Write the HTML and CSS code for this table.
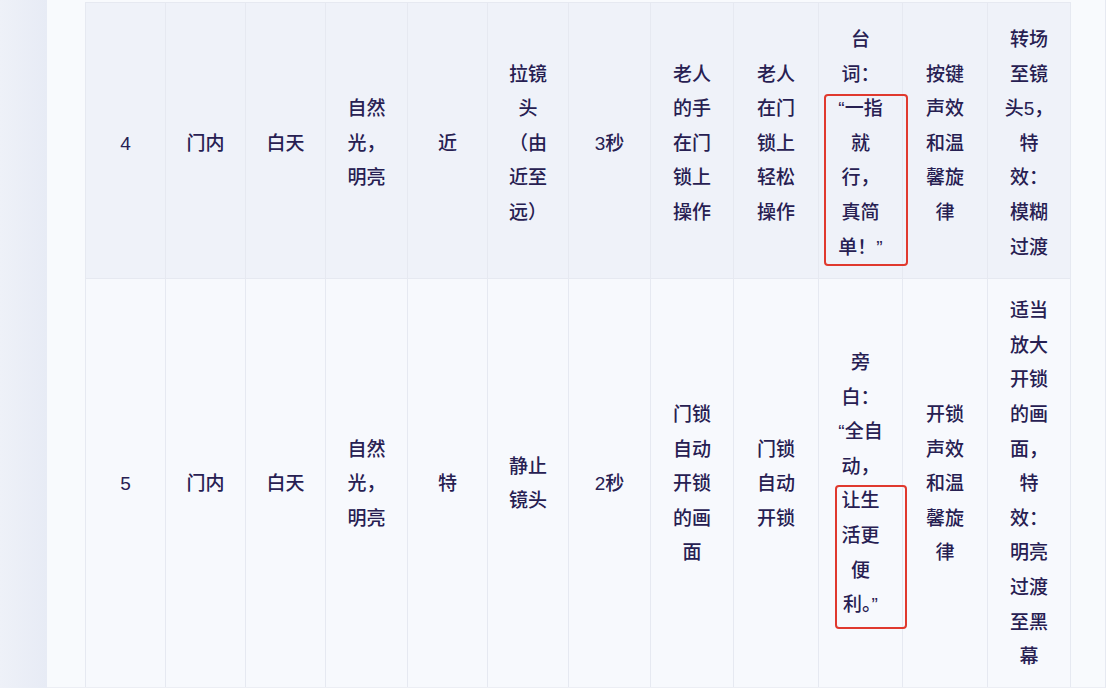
FILE: index.html
```html
<!DOCTYPE html>
<html lang="zh">
<head>
<meta charset="utf-8">
<link rel="stylesheet" href="styles.css">
</head>
<body>
<div class="page">
  <div class="side"></div>
  <div class="sheet">
    <table class="shots">
      <colgroup>
        <col class="w80"><col class="w80"><col class="w80"><col class="w82"><col class="w80"><col class="w81">
        <col class="w82"><col class="w83"><col class="w85"><col class="w84"><col class="w85"><col class="w83">
      </colgroup>
      <tbody>
        <tr class="r1">
          <td>4</td>
          <td>门内</td>
          <td>白天</td>
          <td>自然<br>光，<br>明亮</td>
          <td>近</td>
          <td>拉镜<br>头<br>（由<br>近至<br>远）</td>
          <td>3秒</td>
          <td>老人<br>的手<br>在门<br>锁上<br>操作</td>
          <td>老人<br>在门<br>锁上<br>轻松<br>操作</td>
          <td class="mark-cell">台<br>词：<br>“一指<br>就<br>行，<br>真简<br>单！”<div class="mark mark1"></div></td>
          <td>按键<br>声效<br>和温<br>馨旋<br>律</td>
          <td>转场<br>至镜<br>头5，<br>特<br>效：<br>模糊<br>过渡</td>
        </tr>
        <tr class="r2">
          <td>5</td>
          <td>门内</td>
          <td>白天</td>
          <td>自然<br>光，<br>明亮</td>
          <td>特</td>
          <td>静止<br>镜头</td>
          <td>2秒</td>
          <td>门锁<br>自动<br>开锁<br>的画<br>面</td>
          <td>门锁<br>自动<br>开锁</td>
          <td class="mark-cell">旁<br>白：<br>“全自<br>动，<br>让生<br>活更<br>便<br>利。”<div class="mark mark2"></div></td>
          <td>开锁<br>声效<br>和温<br>馨旋<br>律</td>
          <td>适当<br>放大<br>开锁<br>的画<br>面，<br>特<br>效：<br>明亮<br>过渡<br>至黑<br>幕</td>
        </tr>
      </tbody>
    </table>
  </div>
</div>
</body>
</html>
```

FILE: styles.css
```css
html, body {
  margin: 0;
  padding: 0;
  background: #ffffff;
}

.page {
  display: flex;
  height: 688px;
  width: 1108px;
}

.side {
  width: 47px;
  flex: none;
  background: linear-gradient(90deg, #eef1f8 0%, #e7ebf5 100%);
}

.sheet {
  width: 985px;
  padding: 2px 35px 0 38px;
  background: #f8fafd;
  border-right: 1px solid #e6e9f1;
  border-bottom: 1px solid #eceef4;
  overflow: hidden;
}

.shots {
  border-collapse: collapse;
  table-layout: fixed;
  width: 985px;
  font-family: "Liberation Sans", "Noto Sans CJK SC", sans-serif;
  font-size: 19px;
  font-weight: 500;
  line-height: 34.6px;
  color: #272052;
}

.w80 { width: 80px; }
.w81 { width: 81px; }
.w82 { width: 82px; }
.w83 { width: 83px; }
.w84 { width: 84px; }
.w85 { width: 85px; }

.shots td {
  border: 1px solid #e6e9f1;
  padding: 16px 10px;
  text-align: center;
  vertical-align: middle;
  white-space: nowrap;
}

.r1 td {
  background: #eff2f9;
  height: 242px;
  padding-top: 20px;
  padding-bottom: 13px;
}

.r2 td {
  background: #f7f9fd;
  height: 378px;
  padding-top: 15px;
  padding-bottom: 17px;
}

.mark-cell {
  position: relative;
}

.mark {
  position: absolute;
  border: 2.5px solid #e0392e;
  border-radius: 4px;
  box-sizing: border-box;
  pointer-events: none;
}

.mark1 {
  left: 5px;
  top: 91px;
  width: 84px;
  height: 172px;
}

.mark2 {
  left: 16px;
  top: 206px;
  width: 72px;
  height: 144px;
}
```
